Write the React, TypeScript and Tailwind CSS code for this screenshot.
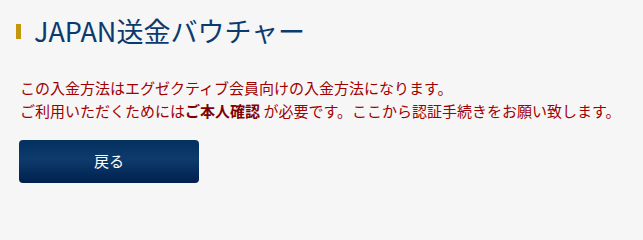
import React from 'react';

export default function App() {
  return (
    <div
      className="min-h-screen w-full bg-[#f6f6f6]"
      style={{ fontFamily: '"Noto Sans CJK JP", "Noto Sans", sans-serif' }}
    >
      {/* Heading */}
      <div className="flex items-center pl-4 pt-[13px]">
        <span className="h-[15px] w-[5px] bg-[#c4960c]" />
        <h1 className="ml-[13px] text-[27px] leading-[36px] font-normal text-[#0b3a6f]">
          JAPAN送金バウチャー
        </h1>
      </div>

      {/* Message */}
      <div className="mt-[27px] pl-5 text-[15px] leading-[23px] text-[#a10000]">
        <p>この入金方法はエグゼクティブ会員向けの入金方法になります。</p>
        <p>
          ご利用いただくためには<strong className="font-bold text-[#800000]">ご本人確認</strong> が必要です。ここから認証手続きをお願い致します。
        </p>
      </div>

      {/* Back button */}
      <div className="mt-[18px] pl-[19px]">
        <button className="flex h-[43px] w-[180px] items-center justify-center rounded-[4px] bg-[linear-gradient(to_bottom,#04305f_0%,#0d3b6c_45%,#00204e_100%)] text-[15px] text-white">
          戻る
        </button>
      </div>
    </div>
  );
}
